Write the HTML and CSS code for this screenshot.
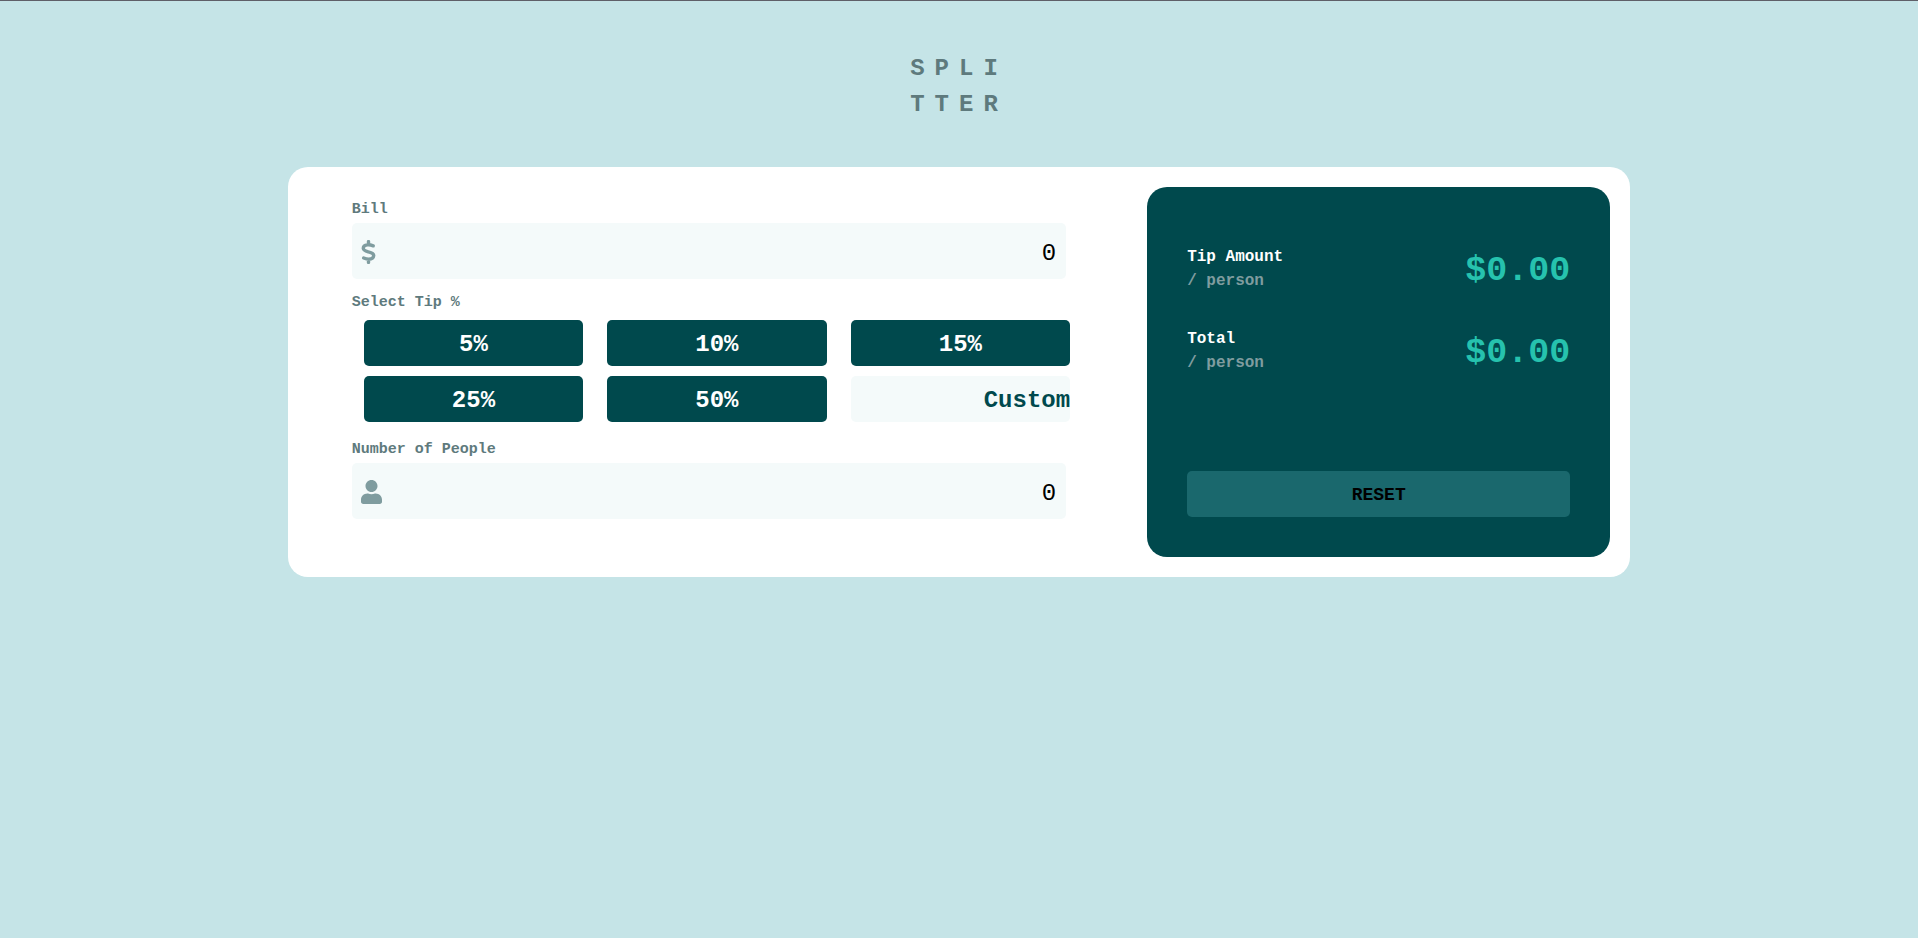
FILE: index.html
```html
<!DOCTYPE html>
<html lang="en">
<head>
  <meta charset="utf-8">
  <meta name="viewport" content="width=device-width, initial-scale=1">
  <title>Splitter</title>
  <link rel="stylesheet" href="styles.css">
</head>
<body>
  <h1 class="logo">SPLI<br>TTER</h1>
  <main class="card">
    <form class="form">
      <label class="label" for="bill">Bill</label>
      <div class="field">
        <svg class="field-icon" viewBox="0 0 15 24" width="15" height="24" aria-hidden="true">
          <path d="M7.5 1.6V4.5M7.5 19.5V22.4M12.2 5.8C10 5 8.2 4.6 6.4 4.9C3.6 5.2 2.2 6.7 2.3 8.5C2.4 10.6 4.8 11.2 7.4 11.9C10.4 12.6 12.9 13.4 12.7 15.7C12.5 18.1 10.2 19.2 7.8 19.2C5.9 19.2 4.4 18.7 2.7 18" fill="none" stroke="currentColor" stroke-width="3.4" stroke-linecap="round" stroke-linejoin="round"/>
        </svg>
        <input class="field-input" id="bill" type="text" inputmode="decimal" value="0">
      </div>

      <label class="label label-tips" for="custom">Select Tip %</label>
      <div class="tips">
        <button class="tip" type="button">5%</button>
        <button class="tip" type="button">10%</button>
        <button class="tip" type="button">15%</button>
        <button class="tip" type="button">25%</button>
        <button class="tip" type="button">50%</button>
        <input class="tip tip-custom" id="custom" type="text" inputmode="decimal" placeholder="Custom">
      </div>

      <label class="label" for="people">Number of People</label>
      <div class="field">
        <svg class="field-icon" viewBox="0 0 448 512" width="21" height="24" aria-hidden="true">
          <path fill="currentColor" d="M224 256c70.7 0 128-57.3 128-128S294.7 0 224 0 96 57.3 96 128s57.3 128 128 128zm89.6 32h-16.7c-22.2 10.2-46.9 16-72.9 16s-50.6-5.8-72.9-16h-16.7C60.2 288 0 348.2 0 422.4V464c0 26.500 21.500 48 48 48h352c26.500 0 48-21.500 48-48v-41.600c0-74.200-60.200-134.400-134.400-134.400z"/>
        </svg>
        <input class="field-input" id="people" type="text" inputmode="numeric" value="0">
      </div>
    </form>

    <section class="panel">
      <div class="results">
        <div class="result">
          <div class="result-name">Tip Amount<span class="result-unit">/ person</span></div>
          <output class="amount">$0.00</output>
        </div>
        <div class="result">
          <div class="result-name">Total<span class="result-unit">/ person</span></div>
          <output class="amount">$0.00</output>
        </div>
      </div>
      <button class="reset" type="button">RESET</button>
    </section>
  </main>
</body>
</html>
```

FILE: styles.css
```css
* {
  box-sizing: border-box;
}

body,
button,
input {
  font-family: "Liberation Mono", monospace;
}

body {
  margin: 0;
  padding: 50px 0;
  border-top: 1px solid #5f5f68;
  background: #c5e4e7;
}

button,
input {
  min-width: 0;
  border: 0;
  padding: 2px 0 0;
}

button {
  cursor: pointer;
}

.logo {
  margin: 0 0 44px;
  color: #5e7a7d;
  font-size: 24px;
  line-height: 36px;
  letter-spacing: 10px;
  text-align: center;
}

.card {
  display: grid;
  grid-template-columns: minmax(0, 29fr) minmax(0, 16fr);
  width: 70%;
  margin: 0 auto;
  padding: 20px;
  border-radius: 20px;
  background: #fff;
}

.form {
  display: flex;
  flex-direction: column;
  padding: 10px 81px 0 44px;
}

.label {
  color: #5e7a7d;
  font-size: 15px;
  font-weight: 700;
  line-height: 26px;
}

.label-tips {
  margin: 11px 0 4px;
}

.field {
  display: flex;
  align-items: center;
  height: 56px;
  padding: 2px 10px 0 9px;
  border-radius: 5px;
  background: #f4fafa;
}

.field-icon {
  flex: none;
  color: #7f9c9f;
}

.field-input {
  flex: 1;
  height: 100%;
  background: transparent;
  color: #000;
  font-size: 24px;
  text-align: right;
}

.tips {
  display: grid;
  grid-template-columns: repeat(3, minmax(0, 1fr));
  gap: 10px 24px;
  margin: 0 -4px 15px 12px;
}

.tip {
  height: 46px;
  border-radius: 5px;
  background: #00494d;
  color: #fff;
  font-size: 24px;
  font-weight: 700;
}

.tip-custom {
  background: #f4fafa;
  color: #00494d;
  text-align: right;
}

.tip-custom::placeholder {
  color: #00494d;
  opacity: 1;
}

.panel {
  display: flex;
  flex-direction: column;
  justify-content: space-between;
  min-height: 370px;
  padding: 40px;
  border-radius: 20px;
  background: #00494d;
}

.results {
  display: grid;
  gap: 34px;
  padding: 18px 0;
}

.result {
  display: flex;
  align-items: flex-start;
  justify-content: space-between;
}

.result-name {
  color: #fff;
  font-size: 16px;
  font-weight: 700;
  line-height: 24px;
}

.result-unit {
  display: block;
  color: #7f9c9f;
}

.amount {
  height: 48px;
  color: #26c2ae;
  font-size: 35px;
  font-weight: 700;
  line-height: 52px;
}

.reset {
  height: 46px;
  border-radius: 5px;
  background: #1a686d;
  color: #000;
  font-size: 18px;
  font-weight: 700;
}
```
